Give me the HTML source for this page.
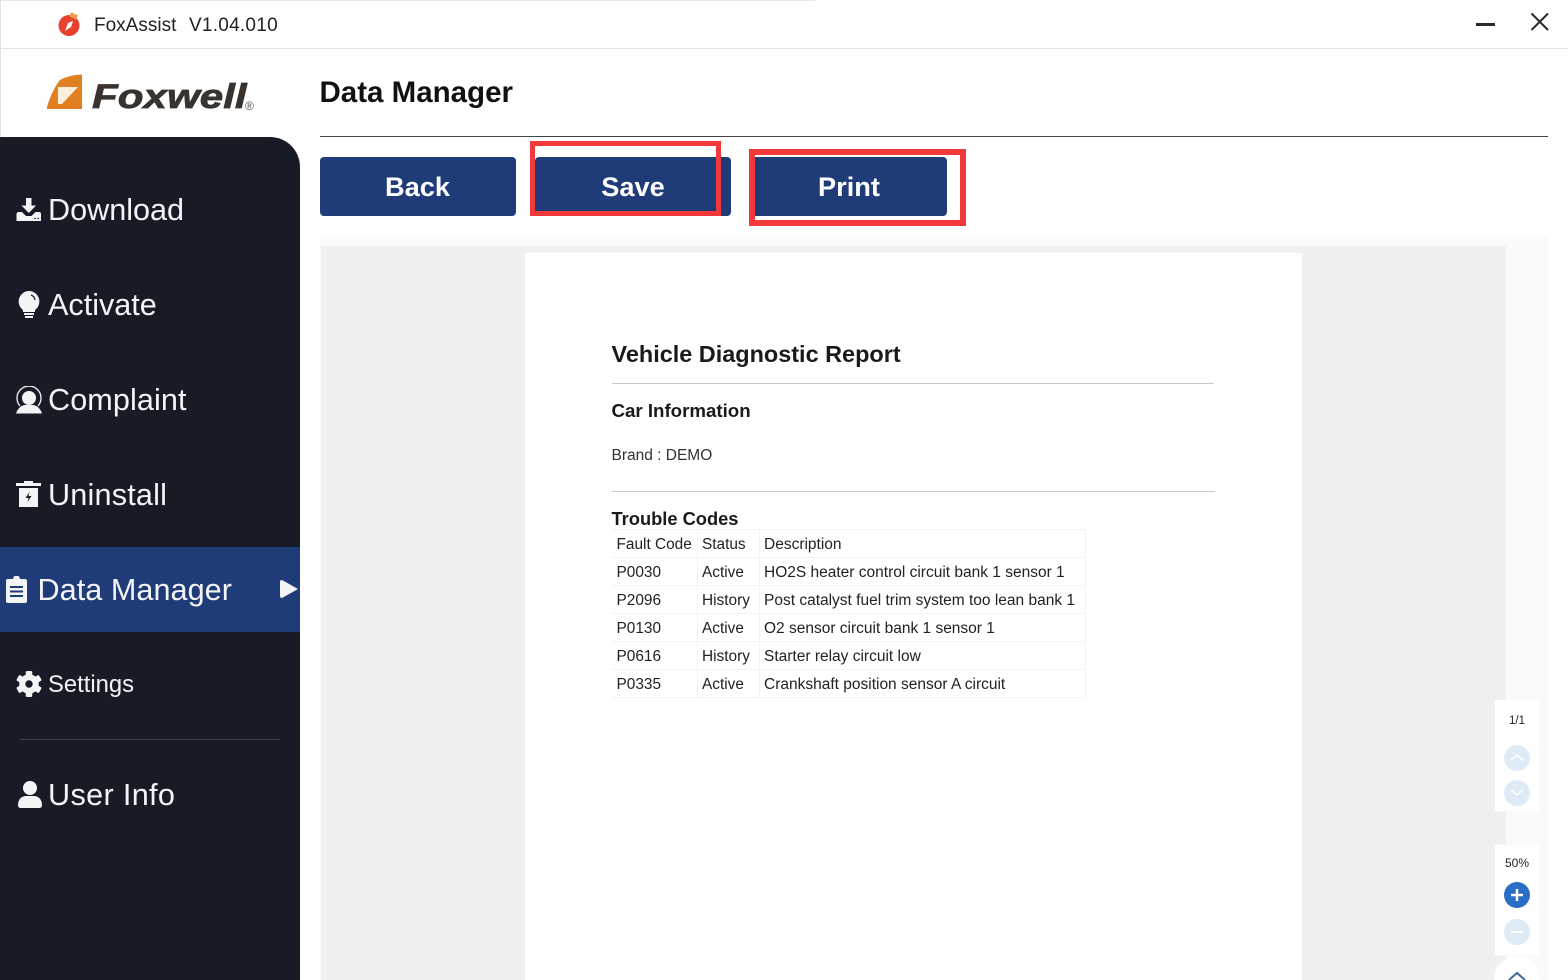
<!DOCTYPE html>
<html><head><meta charset="utf-8"><title>FoxAssist</title>
<style>
html,body{margin:0;padding:0;background:#fff}
#r{position:relative;width:1568px;height:980px;overflow:hidden;background:#fff;font-family:"Liberation Sans",sans-serif;color:#111}
#r div,#r svg{position:absolute}
.t{white-space:nowrap;line-height:1}
.n{color:#f3f4f6;font-size:30.6px}
.b{background:#1f3b78;border-radius:4px;top:157px;height:59px;width:196px;color:#fff;font-weight:bold;font-size:27.2px;line-height:59px;text-align:center}
.c{font-size:15.4px;color:#222}
.d{font-size:15.5px}
.hl{background:#f3f3f3;height:1px;left:612px;width:474px}
.vl{background:#f3f3f3;width:1px;top:529px;height:169px}
.red{border:5px solid #f23a3c;box-sizing:border-box}
.pc{border-radius:50%;background:#deebf6;width:26px;height:26px;left:1504px}
</style></head><body><div id="r">
<!-- title bar -->
<div style="left:0;top:0;width:815px;height:1px;background:#e8e8e8"></div>
<div style="left:0;top:0;width:1px;height:137px;background:#e2e2e2"></div>
<div style="left:0;top:48px;width:1568px;height:1px;background:#e3e3e3"></div>
<svg style="left:56px;top:11px" width="28" height="26" viewBox="0 0 28 26"><circle cx="13" cy="14.500" r="10.500" fill="#e8402f"/><path d="M13 5l3-4 2 2 4 1-2 5z" fill="#ef9a45"/><path d="M9 20l3-8 5-2-2 6z" fill="#fff"/></svg>
<div class="t" style="left:94px;top:15.500px;font-size:19px;color:#222">FoxAssist</div>
<div class="t" style="left:189px;top:15.500px;font-size:19px;color:#222;letter-spacing:.25px">V1.04.010</div>
<div style="left:1476px;top:23px;width:19px;height:3px;background:#2a2a2a"></div>
<svg style="left:1530px;top:12px" width="20" height="20" viewBox="0 0 20 20"><path d="M1.500 1.500L18 18M18 1.500L1.500 18" stroke="#2a2a2a" stroke-width="2" fill="none"/></svg>
<!-- logo -->
<svg style="left:47px;top:74px" width="36" height="36" viewBox="0 0 36 36"><path d="M0 35V33Q5 16 13 6Q22 1 35 0.500V35Z" fill="#e27f22"/><path d="M11 13H31L15 30H11Z" fill="#fbeedd"/></svg>
<div class="t" style="left:92px;top:80px;font-size:34px;font-weight:bold;font-style:italic;color:#38332f;-webkit-text-stroke:.7px #38332f;transform-origin:0 0;transform:scaleX(1.24)">Foxwell</div>
<div class="t" style="left:245px;top:100px;font-size:12px;color:#555">®</div>
<!-- sidebar -->
<div style="left:0;top:137px;width:300px;height:843px;background:#161b26;border-top-right-radius:30px"></div>
<div style="left:0;top:547px;width:300px;height:85px;background:#1f3b78"></div>
<div style="left:20px;top:739px;width:260px;height:1px;background:#3a404c"></div>
<svg style="left:16px;top:195px" width="26" height="27" viewBox="0 0 26 27" fill="#f3f4f6"><path d="M10 3h5.500v7.500H20l-7.200 7.500-7.300-7.500H10z"/><path d="M3 17h3l4 4h5.500l4-4H23q2 0 2 2v7H0.500v-7q0-2 2.500-2z"/><path d="M18.500 23.500h1.500M21.500 23.500h1.500" stroke="#161b26" stroke-width="1.200"/></svg>
<div class="t n" style="left:48px;top:195px">Download</div>
<svg style="left:18px;top:291px" width="22" height="28" viewBox="0 0 22 28" fill="#f3f4f6"><path d="M11 0a10.500 10.500 0 0 1 6 19v2H5v-2A10.500 10.500 0 0 1 11 0z"/><rect x="6" y="22" width="10" height="2"/><rect x="7" y="25" width="8" height="2"/><path d="M13 4a6 6 0 0 1 4 5" stroke="#161b26" stroke-width="1.200" fill="none"/></svg>
<div class="t n" style="left:48px;top:290px">Activate</div>
<svg style="left:15px;top:386px" width="28" height="28" viewBox="0 0 28 28" fill="#f3f4f6"><circle cx="14" cy="12" r="7"/><path d="M5 20A12 12 0 1 1 23 20" fill="none" stroke="#f3f4f6" stroke-width="1.300"/><path d="M1 27.500Q3 21 9 19h10Q25 21 27 27.500z"/></svg>
<div class="t n" style="left:48px;top:385px;letter-spacing:.1px">Complaint</div>
<svg style="left:16px;top:481px" width="25" height="27" viewBox="0 0 25 27" fill="#f3f4f6"><path d="M8 0h9v2h8v3H0V2h8z"/><path d="M3 7h19v19H3z"/><path d="M13.500 11l-4 6h3l-1 4 4-6h-3z" fill="#161b26"/></svg>
<div class="t n" style="left:48px;top:480px;letter-spacing:.2px">Uninstall</div>
<svg style="left:6px;top:576px" width="21" height="27" viewBox="0 0 21 27"><path d="M2 3h5a3.500 3.500 0 0 1 7 0h5a2 2 0 0 1 2 2v20a2 2 0 0 1-2 2H2a2 2 0 0 1-2-2V5a2 2 0 0 1 2-2z" fill="#f3f4f6"/><path d="M4 11h13M4 15.500h13M4 20h13" stroke="#1f3b78" stroke-width="2"/></svg>
<div class="t n" style="left:37.500px;top:575px;letter-spacing:.05px">Data Manager</div>
<svg style="left:280px;top:579px" width="19" height="20" viewBox="0 0 19 20"><path d="M2 1L18 10 2 19Q0 19 0 17V3Q0 1 2 1z" fill="#f3f4f6"/></svg>
<svg style="left:16px;top:671px" width="26" height="26" viewBox="-14 -14 28 28"><g fill="#f3f4f6"><circle r="10.500"/><rect x="-3.500" y="-14" width="7" height="28" rx="1.500"/><rect x="-3.500" y="-14" width="7" height="28" rx="1.500" transform="rotate(60)"/><rect x="-3.500" y="-14" width="7" height="28" rx="1.500" transform="rotate(120)"/></g><circle r="4" fill="#161b26"/></svg>
<div class="t" style="left:48px;top:673px;color:#f3f4f6;font-size:23.800px">Settings</div>
<svg style="left:18px;top:781px" width="24" height="27" viewBox="0 0 24 27" fill="#f3f4f6"><circle cx="12" cy="7" r="7"/><path d="M0 24c0-6 4-9 8-9h8c4 0 8 3 8 9q0 3-3 3H3q-3 0-3-3z"/></svg>
<div class="t n" style="left:48px;top:780px;letter-spacing:.35px">User Info</div>
<!-- heading -->
<div class="t" style="left:319.500px;top:78px;font-size:29.500px;font-weight:bold;color:#111">Data Manager</div>
<div style="left:320px;top:136px;width:1228px;height:1px;background:#444"></div>
<div class="b" style="left:319.500px">Back</div>
<div class="b" style="left:535px">Save</div>
<div class="b" style="left:751px">Print</div>
<div class="red" style="left:530px;top:141px;width:191px;height:75px"></div>
<div class="red" style="left:749px;top:149px;width:217px;height:77px;border-width:6px"></div>
<!-- viewer -->
<div style="left:320px;top:237px;width:1228px;height:743px;background:#fafafa"></div>
<div style="left:321px;top:246px;width:1185px;height:734px;background:#f0f0f0"></div>
<div style="left:525px;top:253px;width:777px;height:727px;background:#fff"></div>
<div class="t" style="left:611.500px;top:343px;font-size:23.450px;font-weight:bold;color:#1a1a1a">Vehicle Diagnostic Report</div>
<div style="left:612px;top:383px;width:602px;height:1px;background:#c9c9c9"></div>
<div class="t" style="left:611.500px;top:402px;font-size:18.700px;font-weight:bold;color:#1a1a1a">Car Information</div>
<div class="t" style="left:611.500px;top:447.500px;font-size:15.500px;color:#333">Brand : DEMO</div>
<div style="left:612px;top:491px;width:603px;height:1px;background:#c9c9c9"></div>
<div class="t" style="left:611.500px;top:510px;font-size:18.300px;font-weight:bold;color:#1a1a1a">Trouble Codes</div>
<div class="hl" style="top:529px"></div><div class="hl" style="top:557px"></div><div class="hl" style="top:585px"></div><div class="hl" style="top:613px"></div><div class="hl" style="top:641px"></div><div class="hl" style="top:669px"></div><div class="hl" style="top:697px"></div>
<div class="vl" style="left:697px"></div><div class="vl" style="left:759px"></div><div class="vl" style="left:1085px"></div>
<div class="t c" style="left:616.500px;top:536.500px">Fault Code</div><div class="t c" style="left:702px;top:536.500px">Status</div><div class="t c d" style="left:764px;top:536.500px">Description</div>
<div class="t c" style="left:616.500px;top:564.500px">P0030</div><div class="t c" style="left:702px;top:564.500px">Active</div><div class="t c d" style="left:764px;top:564.500px">HO2S heater control circuit bank 1 sensor 1</div>
<div class="t c" style="left:616.500px;top:592.500px">P2096</div><div class="t c" style="left:702px;top:592.500px">History</div><div class="t c d" style="left:764px;top:592.500px">Post catalyst fuel trim system too lean bank 1</div>
<div class="t c" style="left:616.500px;top:620.500px">P0130</div><div class="t c" style="left:702px;top:620.500px">Active</div><div class="t c d" style="left:764px;top:620.500px">O2 sensor circuit bank 1 sensor 1</div>
<div class="t c" style="left:616.500px;top:648.500px">P0616</div><div class="t c" style="left:702px;top:648.500px">History</div><div class="t c d" style="left:764px;top:648.500px">Starter relay circuit low</div>
<div class="t c" style="left:616.500px;top:676.500px">P0335</div><div class="t c" style="left:702px;top:676.500px">Active</div><div class="t c d" style="left:764px;top:676.500px">Crankshaft position sensor A circuit</div>
<!-- controls -->
<div style="left:1495px;top:700px;width:44px;height:111px;background:#fff"></div>
<div style="left:1495px;top:845px;width:44px;height:110px;background:#fff"></div>
<div class="t" style="left:1495px;width:44px;text-align:center;top:715.500px;font-size:11.500px;color:#222">1/1</div>
<div class="pc" style="top:745px"></div><div class="pc" style="top:780px"></div>
<svg style="left:1504px;top:745px" width="26" height="61" viewBox="0 0 26 61" fill="none" stroke="#fff" stroke-width="1.500"><path d="M7 15l6-5 6 5M7 45l6 5 6-5"/></svg>
<div class="t" style="left:1495px;width:44px;text-align:center;top:857px;font-size:12px;color:#222">50%</div>
<div class="pc" style="top:882px;background:#2a6dc6"></div>
<svg style="left:1504px;top:882px" width="26" height="26" viewBox="0 0 26 26"><path d="M7 13h12M13 7v12" stroke="#fff" stroke-width="2.500"/></svg>
<div class="pc" style="top:919px"></div>
<svg style="left:1504px;top:919px" width="26" height="26" viewBox="0 0 26 26"><path d="M7 13h12" stroke="#fff" stroke-width="2"/></svg>
<div style="left:1494px;top:956px;width:46px;height:46px;border-radius:50%;background:#fff"></div>
<svg style="left:1507px;top:970px" width="20" height="10" viewBox="0 0 20 10"><path d="M2 10L10 3l8 7" fill="none" stroke="#3b6a9c" stroke-width="2"/></svg>
</div></body></html>
